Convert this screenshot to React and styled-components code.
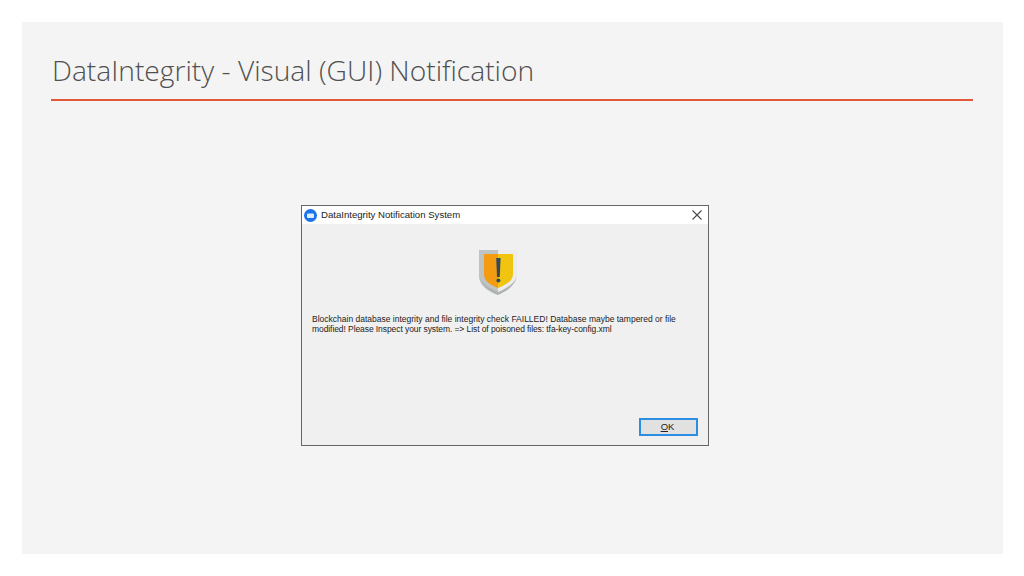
import React from "react";
import styled, { createGlobalStyle } from "styled-components";

const GlobalStyle = createGlobalStyle`
  html, body {
    margin: 0;
    padding: 0;
    background: #ffffff;
    overflow: hidden;
  }
`;

function ShieldIcon() {
  return (
    <svg width="38" height="45" viewBox="0 0 38 45">
      <path d="M0 0H19V45C9 42 0 35 0 26Z" fill="#bfc3c4" />
      <path d="M19 0H38V26C38 35 29 42 19 45Z" fill="#ececec" />
      <path d="M0 25C1 35 10 41 19 45C28 41 37 35 38 25C37 33 28 38 19 42C10 38 1 33 0 25Z" fill="#aeb2b2" />
      <path d="M5 4H19V38C11 35 5 31 5 24Z" fill="#f39c12" />
      <path d="M19 4H34V24C34 31 27 35 19 38Z" fill="#f1c40f" />
      <path d="M17.2 8H21.6L20.8 27H18Z" fill="#34495e" />
      <circle cx="19.4" cy="30.5" r="2" fill="#34495e" />
    </svg>
  );
}

function AppIcon() {
  return (
    <svg width="13" height="13" viewBox="0 0 13 13">
      <circle cx="6.5" cy="6.5" r="6.5" fill="#1a73e8" />
      <rect x="3" y="4.5" width="7" height="4.5" rx="1" fill="#dcebfb" />
    </svg>
  );
}

function CloseIcon() {
  return (
    <svg width="10" height="10" viewBox="0 0 10 10">
      <path d="M0.5 0.5L9.5 9.5M9.5 0.5L0.5 9.5" stroke="#4a4a4a" strokeWidth="1.1" fill="none" />
    </svg>
  );
}

export default function App() {
  return (
    <>
      <GlobalStyle />
      <Page>
        <Slide>
          <Title>DataIntegrity - Visual (GUI) Notification</Title>
          <Rule />
          <Stage>
            <Dialog>
              <TitleBar>
                <AppIcon />
                <DialogTitle>DataIntegrity Notification System</DialogTitle>
                <CloseButton>
                  <CloseIcon />
                </CloseButton>
              </TitleBar>
              <DialogBody>
                <IconRow>
                  <ShieldIcon />
                </IconRow>
                <Message>
                  <MessageLine>
                    Blockchain database integrity and file integrity check FAILLED! Database maybe tampered or file
                  </MessageLine>
                  <MessageLine $tight>
                    modified! Please Inspect your system. =&gt; List of poisoned files: tfa-key-config.xml
                  </MessageLine>
                </Message>
                <Footer>
                  <OkButton>
                    <u>O</u>K
                  </OkButton>
                </Footer>
              </DialogBody>
            </Dialog>
          </Stage>
        </Slide>
      </Page>
    </>
  );
}

const Page = styled.div`
  width: 1024px;
  height: 576px;
  padding: 22px 21px 22px 22px;
  box-sizing: border-box;
  background: #ffffff;
`;

const Slide = styled.div`
  width: 100%;
  height: 100%;
  box-sizing: border-box;
  padding: 27px 30px 0 29px;
  display: flex;
  flex-direction: column;
  background: #f4f4f4;
`;

const Title = styled.h1`
  margin: 0 0 0 1px;
  height: 50px;
  font-family: "Open Sans", "Liberation Sans", sans-serif;
  font-size: 28.2px;
  line-height: 42px;
  font-weight: 300;
  color: #505050;
  white-space: nowrap;
`;

const Rule = styled.div`
  height: 2px;
  background: #e2583a;
`;

const Stage = styled.div`
  display: flex;
  padding-top: 104px;
  padding-left: 250px;
`;

const Dialog = styled.div`
  width: 408px;
  height: 241px;
  box-sizing: border-box;
  display: flex;
  flex-direction: column;
  border: 1px solid #666666;
  background: #f0f0f0;
`;

const TitleBar = styled.div`
  height: 18px;
  flex-shrink: 0;
  display: flex;
  align-items: center;
  padding: 0 6px 0 2px;
  background: #ffffff;
`;

const DialogTitle = styled.span`
  margin-left: 4px;
  padding-bottom: 2px;
  font-family: "Liberation Sans", Arial, sans-serif;
  font-size: 9.6px;
  color: #222222;
  flex: 1;
`;

const CloseButton = styled.span`
  display: flex;
  align-items: center;
`;

const DialogBody = styled.div`
  flex: 1;
  display: flex;
  flex-direction: column;
  padding: 26px 10px 9px 10px;
`;

const IconRow = styled.div`
  display: flex;
  justify-content: center;
  height: 45px;
  margin-right: 14px;
`;

const Message = styled.div`
  margin: 19px 0 0 0;
  font-family: "Liberation Sans", Arial, sans-serif;
  font-size: 8.5px;
  line-height: 10.4px;
  color: #1c1c1c;
`;

const MessageLine = styled.div`
  white-space: nowrap;
  letter-spacing: ${(props) => (props.$tight ? "-0.08px" : "0")};
`;

const Footer = styled.div`
  margin-top: auto;
  display: flex;
  justify-content: flex-end;
`;

const OkButton = styled.div`
  width: 59px;
  height: 18px;
  box-sizing: border-box;
  padding: 0 2px 2px 0;
  display: flex;
  align-items: center;
  justify-content: center;
  border: 2px solid #2b8ee0;
  background: #e1e1e1;
  font-family: "Liberation Sans", Arial, sans-serif;
  font-size: 9.5px;
  color: #222222;
`;
